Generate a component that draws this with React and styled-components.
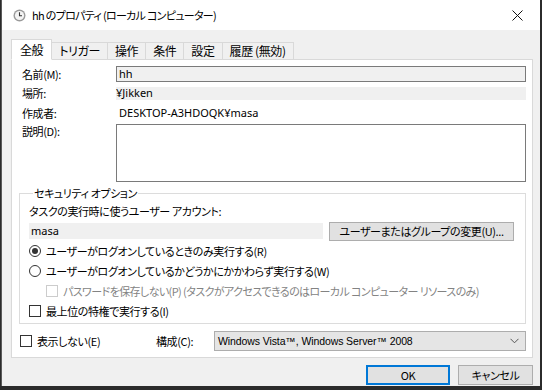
import React from "react";
import styled, { createGlobalStyle } from "styled-components";

const Global = createGlobalStyle`
  html, body { margin: 0; padding: 0; background: #2b2b2b; }
  body {
    font-family: "Noto Sans CJK JP", "Noto Sans", sans-serif;
    font-size: 11px;
    letter-spacing: -0.4px;
    color: #000;
    font-feature-settings: "palt";
  }
`;

const Window = styled.div`
  width: 538px;
  height: 386px;
  margin-left: 1px;
  background: #f0f0f0;
  border-left: 1px solid #5a5a5a;
  display: flex;
  flex-direction: column;
  overflow: hidden;
`;

const TitleBar = styled.div`
  height: 30px;
  background: #fff;
  display: flex;
  align-items: center;
  padding-left: 11px;
  gap: 6px;
`;

const Title = styled.div`
  flex: 1;
  line-height: 16px;
  font-size: 11px;
  letter-spacing: -0.7px;
`;

const CloseBtn = styled.div`
  width: 46px;
  height: 30px;
  display: flex;
  align-items: center;
  justify-content: center;
`;

const Body = styled.div`
  padding: 8px 7px 0 9px;
  display: flex;
  flex-direction: column;
`;

const Tabs = styled.div`
  display: flex;
  align-items: flex-end;
  height: 21px;
  position: relative;
  z-index: 1;
`;

const Tab = styled.div`
  height: ${(p) => (p.active ? "21px" : "17px")};
  padding: 0 ${(p) => (p.active ? "8px" : "7px")};
  margin-left: ${(p) => (p.first ? "0" : "-1px")};
  background: ${(p) => (p.active ? "#fff" : "#f0f0f0")};
  border: 1px solid #d9d9d9;
  border-bottom: ${(p) => (p.active ? "1px solid #fff" : "none")};
  display: flex;
  align-items: center;
  line-height: 16px;
  font-size: 12px;
  box-sizing: border-box;
  margin-bottom: ${(p) => (p.active ? "-1px" : "0")};
  z-index: ${(p) => (p.active ? 2 : 1)};
`;

const Panel = styled.div`
  height: 299px;
  background: #fff;
  border: 1px solid #d9d9d9;
  box-sizing: border-box;
  padding: 6px 6px 0 7px;
  display: flex;
  flex-direction: column;
`;

const FieldGrid = styled.div`
  display: grid;
  grid-template-columns: 94px 1fr;
  grid-template-rows: 16px 16px 17px 58px;
  row-gap: 3px;
  padding-left: 3px;
  line-height: 16px;
`;

const Label = styled.div`
  align-self: ${(p) => (p.top ? "start" : "center")};
  margin-top: ${(p) => (p.top ? "-1px" : "0")};
`;

const TextBox = styled.div`
  height: ${(p) => p.h || 16}px;
  box-sizing: border-box;
  border: 1px solid #7a7a7a;
  background: ${(p) => (p.readonly ? "#f0f0f0" : "#fff")};
  padding-left: 2px;
  display: flex;
  align-items: center;
  font-family: "Noto Sans", "Noto Sans CJK JP", sans-serif;
  letter-spacing: 0;
`;

const Plain = styled.div`
  align-self: center;
  height: ${(p) => (p.shaded ? 13 : 16)}px;
  background: ${(p) => (p.shaded ? "#f0f0f0" : "transparent")};
  padding-left: ${(p) => p.indent || 0}px;
  display: flex;
  align-items: center;
  font-family: "Noto Sans", "Noto Sans CJK JP", sans-serif;
  letter-spacing: 0;
`;

const Group = styled.fieldset`
  margin: 4px 0 0 0;
  padding: 1px 9px 2px 9px;
  border: 1px solid #dcdcdc;
  display: flex;
  flex-direction: column;
  line-height: 16px;
`;

const Legend = styled.legend`
  padding: 0 1px;
  margin-left: 4px;
  line-height: 14px;
`;

const GroupRow = styled.div`
  height: 20px;
  display: flex;
  align-items: center;
  gap: 5px;
  padding-left: ${(p) => p.indent || 0}px;
  color: ${(p) => (p.disabled ? "#838383" : "#000")};
  letter-spacing: ${(p) => (p.disabled ? "-0.6px" : "-0.4px")};
  white-space: nowrap;
`;

const AccountBox = styled.div`
  flex: 0 0 294px;
  height: 16px;
  box-sizing: border-box;
  background: #f0f0f0;
  padding-left: 2px;
  margin-right: 1px;
  display: flex;
  align-items: center;
  font-family: "Noto Sans", sans-serif;
  letter-spacing: 0;
`;

const Button = styled.div`
  height: ${(p) => p.h || 20}px;
  width: ${(p) => (p.w ? p.w + "px" : "auto")};
  flex: none;
  box-sizing: border-box;
  background: #e1e1e1;
  border: ${(p) => (p.primary ? "2px solid #0078d7" : "1px solid #adadad")};
  display: flex;
  align-items: center;
  justify-content: center;
  line-height: 16px;
  white-space: nowrap;
`;

const Radio = styled.span`
  width: 12px;
  height: 12px;
  box-sizing: border-box;
  border-radius: 50%;
  border: 1px solid #333;
  background: #fff;
  display: flex;
  align-items: center;
  justify-content: center;
  flex: none;
  &::after {
    content: "";
    width: 6px;
    height: 6px;
    border-radius: 50%;
    background: ${(p) => (p.checked ? "#333" : "transparent")};
  }
`;

const Check = styled.span`
  width: 12px;
  height: 12px;
  box-sizing: border-box;
  border: 1px solid ${(p) => (p.disabled ? "#cccccc" : "#333")};
  background: #fff;
  flex: none;
`;

const BottomRow = styled.div`
  margin-top: 7px;
  height: 20px;
  display: flex;
  align-items: center;
  padding-left: 1px;
  line-height: 16px;
`;

const CheckLabel = styled.div`
  display: flex;
  align-items: center;
  gap: 5px;
  width: 136px;
`;

const ComboLabel = styled.div`
  width: 58px;
`;

const Combo = styled.div`
  flex: 1;
  height: 20px;
  box-sizing: border-box;
  background: #e5e5e5;
  border: 1px solid #adadad;
  display: flex;
  align-items: center;
  padding: 0 6px 0 3px;
  font-family: "Liberation Sans", sans-serif;
  font-size: 10.5px;
  letter-spacing: -0.1px;
  span { flex: 1; }
`;

const Footer = styled.div`
  display: flex;
  justify-content: flex-end;
  gap: 8px;
  margin-top: 7px;
`;

const ClockIcon = () => (
  <svg width="13" height="13" viewBox="0 0 13 13">
    <circle cx="6.5" cy="6.5" r="6" fill="#9a9a9a" />
    <circle cx="6.5" cy="6.5" r="4.6" fill="#f4f4f4" />
    <path d="M6.5 3.2 V6.7 H9" stroke="#333" strokeWidth="1.1" fill="none" />
  </svg>
);

const CloseIcon = () => (
  <svg width="11" height="11" viewBox="0 0 11 11">
    <path d="M0.5 0.5 L10.5 10.5 M10.5 0.5 L0.5 10.5" stroke="#111" strokeWidth="1" />
  </svg>
);

const Chevron = () => (
  <svg width="9" height="6" viewBox="0 0 9 6">
    <path d="M0.5 0.8 L4.5 4.8 L8.5 0.8" stroke="#555" strokeWidth="1" fill="none" />
  </svg>
);

const tabs = ["全般", "トリガー", "操作", "条件", "設定", "履歴 (無効)"];

export default function App() {
  return (
    <>
      <Global />
      <Window>
        <TitleBar>
          <ClockIcon />
          <Title>hh のプロパティ (ローカル コンピューター)</Title>
          <CloseBtn>
            <CloseIcon />
          </CloseBtn>
        </TitleBar>
        <Body>
          <Tabs>
            {tabs.map((t, i) => (
              <Tab key={t} active={i === 0} first={i === 0}>
                {t}
              </Tab>
            ))}
          </Tabs>
          <Panel>
            <FieldGrid>
              <Label>名前(M):</Label>
              <TextBox readonly>hh</TextBox>
              <Label>場所:</Label>
              <Plain shaded>¥Jikken</Plain>
              <Label>作成者:</Label>
              <Plain indent={3}>DESKTOP-A3HDOQK¥masa</Plain>
              <Label top>説明(D):</Label>
              <TextBox h={58} />
            </FieldGrid>
            <Group>
              <Legend>セキュリティ オプション</Legend>
              <GroupRow>タスクの実行時に使うユーザー アカウント:</GroupRow>
              <GroupRow>
                <AccountBox>masa</AccountBox>
                <Button w={185} h={19}>ユーザーまたはグループの変更(U)...</Button>
              </GroupRow>
              <GroupRow>
                <Radio checked />
                ユーザーがログオンしているときのみ実行する(R)
              </GroupRow>
              <GroupRow>
                <Radio />
                ユーザーがログオンしているかどうかにかかわらず実行する(W)
              </GroupRow>
              <GroupRow indent={17} disabled>
                <Check disabled />
                パスワードを保存しない(P) (タスクがアクセスできるのはローカル コンピューター リソースのみ)
              </GroupRow>
              <GroupRow>
                <Check />
                最上位の特権で実行する(I)
              </GroupRow>
            </Group>
            <BottomRow>
              <CheckLabel>
                <Check />
                表示しない(E)
              </CheckLabel>
              <ComboLabel>構成(C):</ComboLabel>
              <Combo>
                <span>Windows Vista™, Windows Server™ 2008</span>
                <Chevron />
              </Combo>
            </BottomRow>
          </Panel>
          <Footer>
            <Button primary w={84}>OK</Button>
            <Button w={75}>キャンセル</Button>
          </Footer>
        </Body>
      </Window>
    </>
  );
}
